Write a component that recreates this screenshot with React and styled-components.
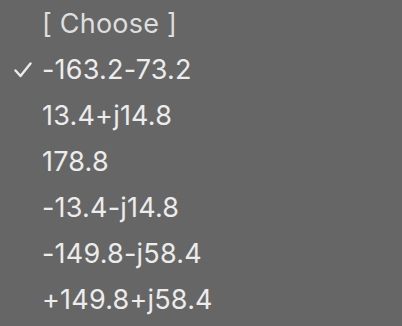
import styled, { createGlobalStyle } from "styled-components";

const Global = createGlobalStyle`
  html, body {
    margin: 0;
    padding: 0;
    background: #666666;
  }
`;

const options = [
  "-163.2-73.2",
  "13.4+j14.8",
  "178.8",
  "-13.4-j14.8",
  "-149.8-j58.4",
  "+149.8+j58.4",
];

function Check() {
  return (
    <svg width="18" height="16" viewBox="0 0 18 16">
      <polyline
        points="1.5,8.5 6.5,14 16.5,1.5"
        fill="none"
        stroke="#ececec"
        strokeWidth="2.4"
        strokeLinecap="round"
        strokeLinejoin="round"
      />
    </svg>
  );
}

export default function App() {
  const selected = "-163.2-73.2";
  return (
    <>
      <Global />
      <Lista>
        <Opcao $placeholder>
          <Marca />
          <span>[ Choose ]</span>
        </Opcao>
        {options.map((value) => (
          <Opcao key={value}>
            <Marca>{value === selected ? <Check /> : null}</Marca>
            <span>{value}</span>
          </Opcao>
        ))}
      </Lista>
    </>
  );
}

const Lista = styled.div`
  width: 402px;
  height: 326px;
  background: #666666;
  display: flex;
  flex-direction: column;
  font-family: "Inter", "Liberation Sans", sans-serif;
`;

const Opcao = styled.div`
  height: 46px;
  display: flex;
  align-items: center;
  font-size: 27px;
  letter-spacing: 0.2px;
  color: ${(p) => (p.$placeholder ? "#dedede" : "#ececec")};
`;

const Marca = styled.div`
  width: 42px;
  box-sizing: border-box;
  padding-left: 14px;
  display: flex;
  align-items: center;
  padding-top: 2px;
`;
